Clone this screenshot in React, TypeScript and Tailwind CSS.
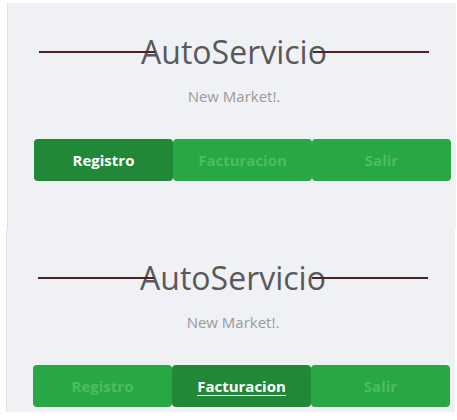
import React from "react";

const tabs = ["Registro", "Facturacion", "Salir"];

function Panel({ active, underline, className }: { active: number; underline?: boolean; className: string }) {
  return (
    <div className={`bg-[#f0f1f5] border-l border-[#e1e2e6] flex flex-col overflow-hidden ${className}`}>
      <div className="mt-[29px] ml-[31px] w-[390px] h-[40px] flex items-center">
        <div className="flex-1 h-[2px] bg-[#4b2426] relative z-10" />
        <h1 className="-mx-[14px] text-[32px] leading-[40px] text-[#595959] font-medium whitespace-nowrap">
          AutoServicio
        </h1>
        <div className="flex-1 h-[2px] bg-[#4b2426] relative z-10" />
      </div>
      <p className="mt-[14px] ml-[31px] w-[390px] text-center text-[15px] leading-[20px] text-[#9a9a9a]">
        New Market!.
      </p>
      <div className="mt-[33px] ml-[26px] w-[417px] flex">
        {tabs.map((t, i) => (
          <button
            key={t}
            className={`flex-1 h-[42px] rounded-[4px] text-[15px] font-bold ${
              i === active
                ? `bg-[#218838] text-white ${underline ? "underline underline-offset-[3px]" : ""}`
                : "bg-[#28a745] text-[#4dbc62]"
            }`}
          >
            {t}
          </button>
        ))}
      </div>
    </div>
  );
}

export default function App() {
  return (
    <div className="bg-white min-h-[420px] pt-[3px]" style={{ fontFamily: '"Open Sans", "Noto Sans", sans-serif' }}>
      <Panel active={0} className="ml-[7px] w-[449px] h-[226px]" />
      <Panel active={1} underline className="ml-[6px] w-[449px] h-[183px]" />
    </div>
  );
}
